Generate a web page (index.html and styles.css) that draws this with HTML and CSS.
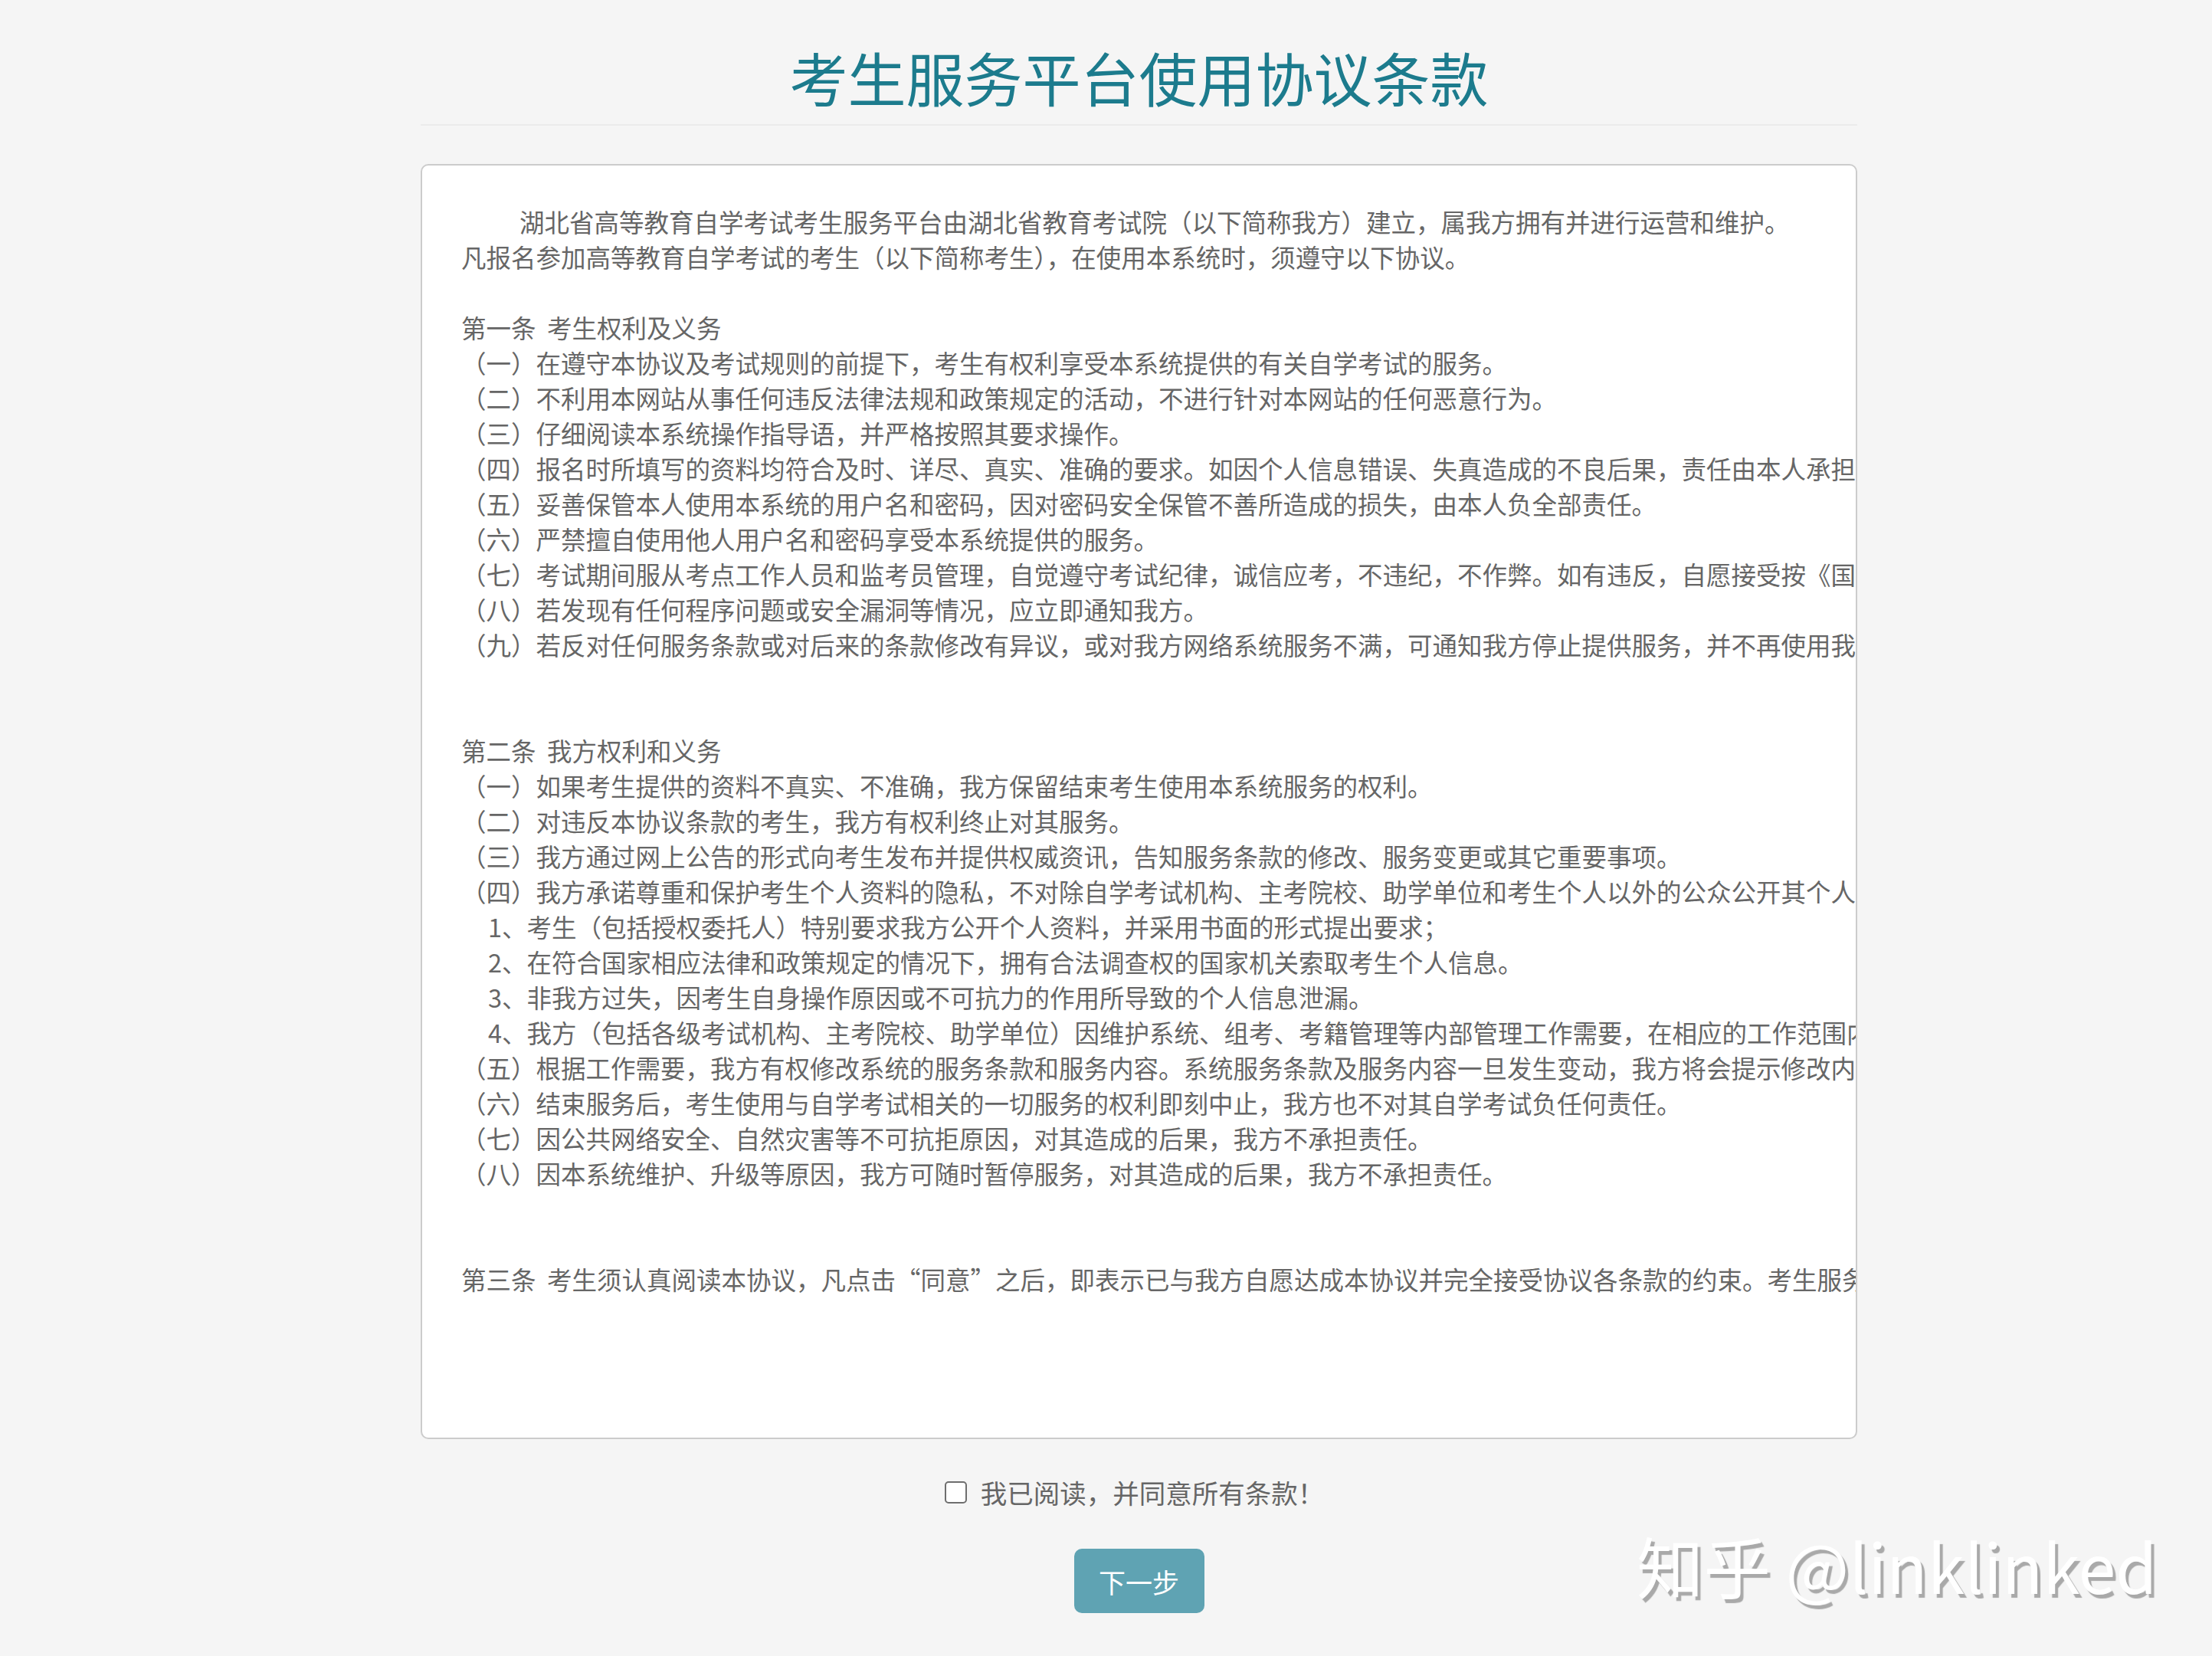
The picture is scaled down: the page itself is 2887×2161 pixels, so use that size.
FILE: index.html
```html
<!DOCTYPE html>
<html lang="zh-CN">
<head>
<meta charset="utf-8">
<title>考生服务平台使用协议条款</title>
<link rel="stylesheet" href="styles.css">
</head>
<body>
<div class="container">
  <div class="page-header">
    <h1 class="title">考生服务平台使用协议条款</h1>
  </div>
  <div class="terms">
    <div class="line indent">湖北省高等教育自学考试考生服务平台由湖北省教育考试院（以下简称我方）建立，属我方拥有并进行运营和维护。</div>
    <div class="line">凡报名参加高等教育自学考试的考生（以下简称考生），在使用本系统时，须遵守以下协议。</div>
    <div class="blank"></div>
    <div class="line">第一条&nbsp;&nbsp;考生权利及义务</div>
    <div class="line">（一）在遵守本协议及考试规则的前提下，考生有权利享受本系统提供的有关自学考试的服务。</div>
    <div class="line">（二）不利用本网站从事任何违反法律法规和政策规定的活动，不进行针对本网站的任何恶意行为。</div>
    <div class="line">（三）仔细阅读本系统操作指导语，并严格按照其要求操作。</div>
    <div class="line">（四）报名时所填写的资料均符合及时、详尽、真实、准确的要求。如因个人信息错误、失真造成的不良后果，责任由本人承担。</div>
    <div class="line">（五）妥善保管本人使用本系统的用户名和密码，因对密码安全保管不善所造成的损失，由本人负全部责任。</div>
    <div class="line">（六）严禁擅自使用他人用户名和密码享受本系统提供的服务。</div>
    <div class="line">（七）考试期间服从考点工作人员和监考员管理，自觉遵守考试纪律，诚信应考，不违纪，不作弊。如有违反，自愿接受按《国家教育考试违规处理办法》的处理。</div>
    <div class="line">（八）若发现有任何程序问题或安全漏洞等情况，应立即通知我方。</div>
    <div class="line">（九）若反对任何服务条款或对后来的条款修改有异议，或对我方网络系统服务不满，可通知我方停止提供服务，并不再使用我方系统。</div>
    <div class="blank"></div>
    <div class="blank"></div>
    <div class="line">第二条&nbsp;&nbsp;我方权利和义务</div>
    <div class="line">（一）如果考生提供的资料不真实、不准确，我方保留结束考生使用本系统服务的权利。</div>
    <div class="line">（二）对违反本协议条款的考生，我方有权利终止对其服务。</div>
    <div class="line">（三）我方通过网上公告的形式向考生发布并提供权威资讯，告知服务条款的修改、服务变更或其它重要事项。</div>
    <div class="line">（四）我方承诺尊重和保护考生个人资料的隐私，不对除自学考试机构、主考院校、助学单位和考生个人以外的公众公开其个人资料，但下列情况除外：</div>
    <div class="line sub">1、考生（包括授权委托人）特别要求我方公开个人资料，并采用书面的形式提出要求；</div>
    <div class="line sub">2、在符合国家相应法律和政策规定的情况下，拥有合法调查权的国家机关索取考生个人信息。</div>
    <div class="line sub">3、非我方过失，因考生自身操作原因或不可抗力的作用所导致的个人信息泄漏。</div>
    <div class="line sub">4、我方（包括各级考试机构、主考院校、助学单位）因维护系统、组考、考籍管理等内部管理工作需要，在相应的工作范围内使用考生个人信息。</div>
    <div class="line">（五）根据工作需要，我方有权修改系统的服务条款和服务内容。系统服务条款及服务内容一旦发生变动，我方将会提示修改内容。</div>
    <div class="line">（六）结束服务后，考生使用与自学考试相关的一切服务的权利即刻中止，我方也不对其自学考试负任何责任。</div>
    <div class="line">（七）因公共网络安全、自然灾害等不可抗拒原因，对其造成的后果，我方不承担责任。</div>
    <div class="line">（八）因本系统维护、升级等原因，我方可随时暂停服务，对其造成的后果，我方不承担责任。</div>
    <div class="blank"></div>
    <div class="blank"></div>
    <div class="line">第三条&nbsp;&nbsp;考生须认真阅读本协议，凡点击“同意”之后，即表示已与我方自愿达成本协议并完全接受协议各条款的约束。考生服务平台的最终解释权归湖北省教育考试院所有。</div>
  </div>
  <div class="agree">
    <label class="agree-label"><span class="checkbox"></span><span class="agree-text">我已阅读，并同意所有条款！</span></label>
  </div>
  <div class="actions">
    <button class="btn-next" type="button">下一步</button>
  </div>
</div>
<div class="watermark">知乎 @linklinked</div>
</body>
</html>
```

FILE: styles.css
```css
html, body {
  margin: 0;
  padding: 0;
}

body {
  background: #f5f5f5;
  font-family: "Noto Sans CJK SC", "Noto Sans", sans-serif;
  color: #666666;
  width: 2887px;
  height: 2161px;
  overflow: hidden;
  position: relative;
}

.container {
  width: 1875px;
  margin-left: 549px;
}

.page-header {
  border-bottom: 2px solid #ebebeb;
}

.title {
  margin: 40px 0 0 0;
  height: 122px;
  line-height: 120px;
  font-size: 76px;
  font-weight: 400;
  color: #1c7b8d;
  text-align: center;
}

.terms {
  box-sizing: border-box;
  margin-top: 50px;
  height: 1664px;
  background: #ffffff;
  border: 2px solid #cccccc;
  border-radius: 10px;
  padding: 50px 0 0 51px;
  overflow: hidden;
}

.line {
  white-space: nowrap;
  font-size: 32.5px;
  line-height: 46px;
  height: 46px;
  color: #666666;
}

.indent {
  text-indent: 76px;
}

.sub {
  padding-left: 35px;
}

.blank {
  height: 46px;
}

.agree {
  margin-top: 46px;
  display: flex;
  justify-content: center;
}

.agree-label {
  display: flex;
  align-items: center;
  gap: 18px;
  height: 46px;
  font-size: 34.5px;
  color: #666666;
  margin-left: -12px;
}

.checkbox {
  box-sizing: border-box;
  width: 29px;
  height: 29px;
  border: 2px solid #6e6e6e;
  border-radius: 5px;
  background: #ffffff;
}

.agree-text {
  line-height: 46px;
}

.actions {
  margin-top: 51px;
  display: flex;
  justify-content: center;
}

.btn-next {
  width: 170px;
  height: 84px;
  border: none;
  border-radius: 10px;
  background: #5fa3b3;
  color: #ffffff;
  font-family: "Noto Sans CJK SC", "Noto Sans", sans-serif;
  font-size: 35px;
  padding: 0;
}

.watermark {
  position: absolute;
  left: 2136px;
  top: 1982px;
  font-size: 87.5px;
  line-height: 120px;
  font-weight: 400;
  white-space: nowrap;
  color: #ffffff;
  text-shadow: 4px 5px 1px #a9a9a9;
}
```
